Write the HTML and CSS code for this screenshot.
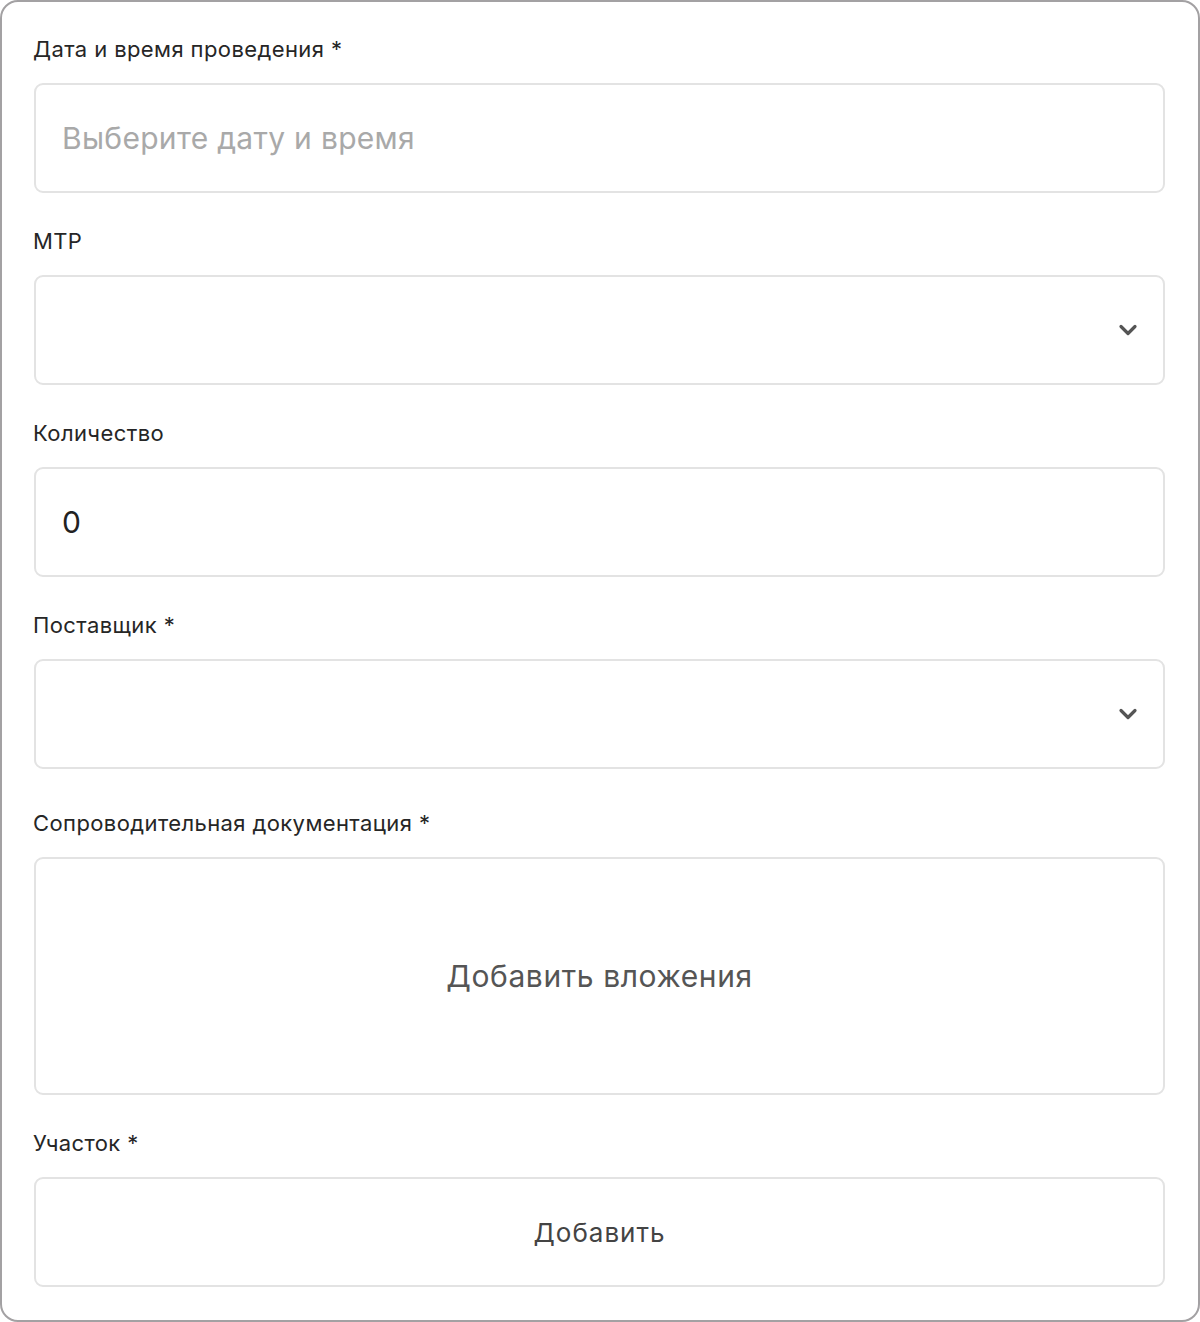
FILE: index.html
```html
<!DOCTYPE html>
<html lang="ru">
<head>
<meta charset="utf-8">
<link rel="stylesheet" href="styles.css">
</head>
<body>
<div class="frame">
  <div class="field">
    <div class="label">Дата и время проведения *</div>
    <div class="input"><span class="placeholder">Выберите дату и время</span></div>
  </div>
  <div class="field">
    <div class="label">МТР</div>
    <div class="input select">
      <span></span>
      <svg class="chev" width="22" height="14" viewBox="0 0 22 14"><path d="M4 3.5 L11 10.5 L18 3.5" fill="none" stroke="#555" stroke-width="3.2" stroke-linecap="round" stroke-linejoin="round"/></svg>
    </div>
  </div>
  <div class="field">
    <div class="label">Количество</div>
    <div class="input"><span class="value">0</span></div>
  </div>
  <div class="field">
    <div class="label">Поставщик *</div>
    <div class="input select">
      <span></span>
      <svg class="chev" width="22" height="14" viewBox="0 0 22 14"><path d="M4 3.5 L11 10.5 L18 3.5" fill="none" stroke="#555" stroke-width="3.2" stroke-linecap="round" stroke-linejoin="round"/></svg>
    </div>
  </div>
  <div class="field field-docs">
    <div class="label">Сопроводительная документация *</div>
    <div class="input dropzone"><span>Добавить вложения</span></div>
  </div>
  <div class="field">
    <div class="label">Участок *</div>
    <div class="input button"><span>Добавить</span></div>
  </div>
</div>
</body>
</html>
```
FILE: styles.css
```css
* { box-sizing: border-box; }
html, body { margin: 0; padding: 0; background: #fff; }
body { font-family: Inter, "Noto Sans", sans-serif; color: #222; }
.frame {
  width: 1200px;
  height: 1322px;
  border: 2px solid #a3a1a3;
  border-radius: 18px;
  padding: 35px 33px 0 32px;
  display: flex;
  flex-direction: column;
  gap: 36px;
}
.field { display: flex; flex-direction: column; }
.field-docs { margin-top: 6px; }
.label {
  font-size: 22px;
  line-height: 24px;
  letter-spacing: 0.4px;
  margin-bottom: 22px;
  margin-left: -1px;
  color: #262626;
}
.input {
  height: 110px;
  border: 2px solid #e3e3e3;
  border-radius: 9px;
  display: flex;
  align-items: center;
  padding: 0 26px;
}
.placeholder { font-size: 30px; color: #a9a9a9; letter-spacing: 0.3px; }
.value { font-size: 30px; color: #222; }
.select { justify-content: space-between; padding-right: 24px; }
.chev { display: block; }
.dropzone {
  height: 238px;
  justify-content: center;
  font-size: 30px;
  letter-spacing: 0.6px;
  color: #555;
}
.button {
  justify-content: center;
  font-size: 26px;
  letter-spacing: 1px;
  color: #444;
}
```
